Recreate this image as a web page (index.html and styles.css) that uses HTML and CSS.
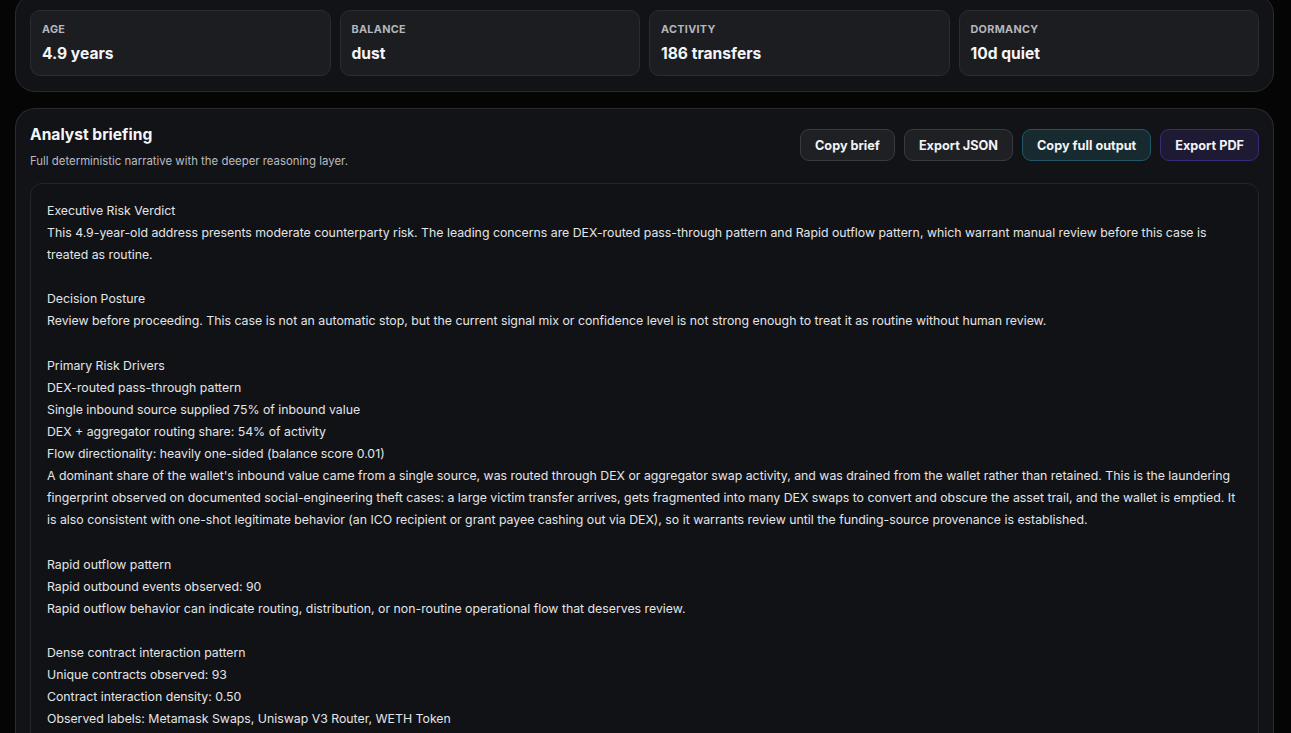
FILE: index.html
```html
<!DOCTYPE html>
<html lang="en">
<head>
<meta charset="utf-8">
<title>Wallet risk report</title>
<link rel="stylesheet" href="styles.css">
</head>
<body>
<main class="page">
  <section class="panel stats-panel">
    <div class="stats">
      <div class="stat"><div class="stat-label">Age</div><div class="stat-value">4.9 years</div></div>
      <div class="stat"><div class="stat-label">Balance</div><div class="stat-value">dust</div></div>
      <div class="stat"><div class="stat-label">Activity</div><div class="stat-value">186 transfers</div></div>
      <div class="stat"><div class="stat-label">Dormancy</div><div class="stat-value">10d quiet</div></div>
    </div>
  </section>

  <section class="panel briefing">
    <header class="briefing-head">
      <div>
        <h2 class="briefing-title">Analyst briefing</h2>
        <p class="briefing-sub">Full deterministic narrative with the deeper reasoning layer.</p>
      </div>
      <div class="actions">
        <button class="btn">Copy brief</button>
        <button class="btn">Export JSON</button>
        <button class="btn btn-teal">Copy full output</button>
        <button class="btn btn-violet">Export PDF</button>
      </div>
    </header>
    <div class="narrative">Executive Risk Verdict
This 4.9-year-old address presents moderate counterparty risk. The leading concerns are DEX-routed pass-through pattern and Rapid outflow pattern, which warrant manual review before this case is treated as routine.

Decision Posture
Review before proceeding. This case is not an automatic stop, but the current signal mix or confidence level is not strong enough to treat it as routine without human review.

Primary Risk Drivers
DEX-routed pass-through pattern
Single inbound source supplied 75% of inbound value
DEX + aggregator routing share: 54% of activity
Flow directionality: heavily one-sided (balance score 0.01)
A dominant share of the wallet's inbound value came from a single source, was routed through DEX or aggregator swap activity, and was drained from the wallet rather than retained. This is the laundering fingerprint observed on documented social-engineering theft cases: a large victim transfer arrives, gets fragmented into many DEX swaps to convert and obscure the asset trail, and the wallet is emptied. It is also consistent with one-shot legitimate behavior (an ICO recipient or grant payee cashing out via DEX), so it warrants review until the funding-source provenance is established.

Rapid outflow pattern
Rapid outbound events observed: 90
Rapid outflow behavior can indicate routing, distribution, or non-routine operational flow that deserves review.

Dense contract interaction pattern
Unique contracts observed: 93
Contract interaction density: 0.50
Observed labels: Metamask Swaps, Uniswap V3 Router, WETH Token

Supporting Context
Wallet age: 4.9 years
Activity level: 186 transfers over the observed window</div>
  </section>
</main>
</body>
</html>
```

FILE: styles.css
```css
* { box-sizing: border-box; }

html, body {
  margin: 0;
  background: #050506;
  color: #e6e7ea;
  font-family: Inter, "Noto Sans", "Liberation Sans", sans-serif;
}

.page {
  padding: 0 17px 0 15px;
  margin-top: -6px;
}

.panel {
  background: #121316;
  border: 1px solid #2a2b2f;
  border-radius: 20px;
  padding: 15px 14px;
}

.stats-panel {
  padding-top: 15px;
  padding-bottom: 15px;
}

.stats {
  display: grid;
  grid-template-columns: repeat(4, 1fr);
  gap: 9px;
}

.stat {
  background: #1c1d21;
  border: 1px solid #2b2c31;
  border-radius: 10px;
  padding: 12px 11px 10px;
  height: 66px;
}

.stat-label {
  font-size: 10.8px;
  font-weight: 700;
  letter-spacing: 0.03em;
  text-transform: uppercase;
  color: #b4b6bc;
  line-height: 14px;
}

.stat-value {
  margin-top: 7px;
  font-size: 15.6px;
  font-weight: 700;
  color: #f4f5f7;
  line-height: 20px;
}

.briefing {
  margin-top: 16px;
  padding-top: 15px;
  border-bottom: none;
  border-bottom-left-radius: 0;
  border-bottom-right-radius: 0;
}

.briefing-head {
  display: flex;
  justify-content: space-between;
  align-items: flex-start;
}

.briefing-title {
  margin: 1px 0 0;
  font-size: 15.6px;
  font-weight: 700;
  line-height: 20px;
  color: #f4f5f7;
}

.briefing-sub {
  margin: 9px 0 0;
  font-size: 11.4px;
  line-height: 14px;
  color: #b9bcc2;
}

.actions {
  display: flex;
  gap: 9px;
  margin-top: 5px;
}

.btn {
  font-family: inherit;
  font-size: 12.7px;
  font-weight: 700;
  color: #f2f3f5;
  background: #1f2024;
  border: 1px solid #3a3b40;
  border-radius: 9px;
  height: 32px;
  padding: 0 14px;
}

.btn-teal {
  background: #172a30;
  border-color: #1f5866;
}

.btn-violet {
  background: #1e1a33;
  border-color: #3a2a78;
}

.narrative {
  margin-top: 15px;
  background: #111215;
  border: 1px solid #25262a;
  border-radius: 12px;
  padding: 16px 16px;
  white-space: pre-wrap;
  font-size: 12.3px;
  line-height: 22.1px;
  color: #e3e5e8;
  height: 600px;
  overflow: hidden;
}
```
